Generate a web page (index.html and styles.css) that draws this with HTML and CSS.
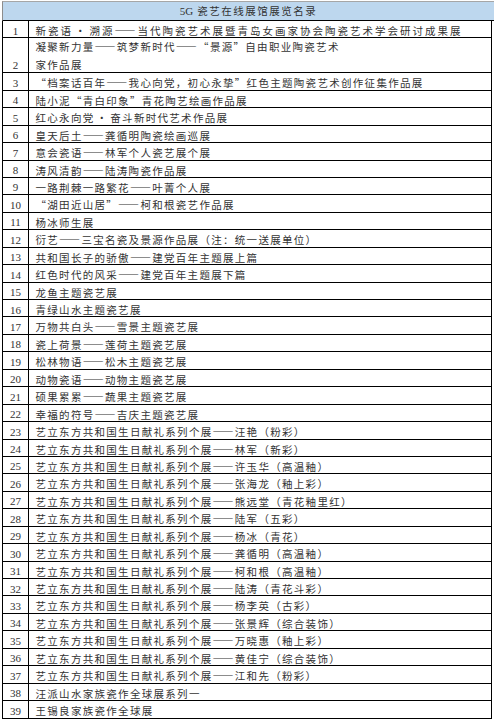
FILE: index.html
```html
<!DOCTYPE html>
<html lang="zh-CN">
<head>
<meta charset="utf-8">
<title>5G瓷艺在线展馆展览名录</title>
<link rel="stylesheet" href="styles.css">
</head>
<body>
<div class="sheet">
  <div class="head"><span class="lat">5G</span> 瓷艺在线展馆展览名录</div>
  <div class="row"><div class="no">1</div><div class="name wide">新瓷语<span class="dot">•</span>溯源——当代陶瓷艺术展暨青岛女画家协会陶瓷艺术学会研讨成果展</div></div>
  <div class="row tall"><div class="no">2</div><div class="name">凝聚新力量——筑梦新时代——“景源”自由职业陶瓷艺术<br>家作品展</div></div>
  <div class="row"><div class="no">3</div><div class="name">“档案话百年——我心向党，初心永挚”红色主题陶瓷艺术创作征集作品展</div></div>
  <div class="row"><div class="no">4</div><div class="name">陆小泥“青白印象”青花陶艺绘画作品展</div></div>
  <div class="row"><div class="no">5</div><div class="name">红心永向党<span class="dot">•</span>奋斗新时代艺术作品展</div></div>
  <div class="row"><div class="no">6</div><div class="name">皇天后土——龚循明陶瓷绘画巡展</div></div>
  <div class="row"><div class="no">7</div><div class="name">意会瓷语——林军个人瓷艺展个展</div></div>
  <div class="row"><div class="no">8</div><div class="name">涛风清韵——陆涛陶瓷作品展</div></div>
  <div class="row"><div class="no">9</div><div class="name">一路荆棘一路繁花——叶菁个人展</div></div>
  <div class="row"><div class="no">10</div><div class="name">“湖田近山居”——柯和根瓷艺作品展</div></div>
  <div class="row"><div class="no">11</div><div class="name">杨冰师生展</div></div>
  <div class="row"><div class="no">12</div><div class="name">衍艺——三宝名瓷及景源作品展（注：统一送展单位）</div></div>
  <div class="row"><div class="no">13</div><div class="name">共和国长子的骄傲——建党百年主题展上篇</div></div>
  <div class="row"><div class="no">14</div><div class="name">红色时代的风采——建党百年主题展下篇</div></div>
  <div class="row"><div class="no">15</div><div class="name">龙鱼主题瓷艺展</div></div>
  <div class="row"><div class="no">16</div><div class="name">青绿山水主题瓷艺展</div></div>
  <div class="row"><div class="no">17</div><div class="name">万物共白头——雪景主题瓷艺展</div></div>
  <div class="row"><div class="no">18</div><div class="name">瓷上荷景——莲荷主题瓷艺展</div></div>
  <div class="row"><div class="no">19</div><div class="name">松林物语——松木主题瓷艺展</div></div>
  <div class="row"><div class="no">20</div><div class="name">动物瓷语——动物主题瓷艺展</div></div>
  <div class="row"><div class="no">21</div><div class="name">硕果累累——蔬果主题瓷艺展</div></div>
  <div class="row"><div class="no">22</div><div class="name">幸福的符号——吉庆主题瓷艺展</div></div>
  <div class="row"><div class="no">23</div><div class="name">艺立东方共和国生日献礼系列个展——汪艳（粉彩）</div></div>
  <div class="row"><div class="no">24</div><div class="name">艺立东方共和国生日献礼系列个展——林军（新彩）</div></div>
  <div class="row"><div class="no">25</div><div class="name">艺立东方共和国生日献礼系列个展——许玉华（高温釉）</div></div>
  <div class="row"><div class="no">26</div><div class="name">艺立东方共和国生日献礼系列个展——张海龙（釉上彩）</div></div>
  <div class="row"><div class="no">27</div><div class="name">艺立东方共和国生日献礼系列个展——熊远堂（青花釉里红）</div></div>
  <div class="row"><div class="no">28</div><div class="name">艺立东方共和国生日献礼系列个展——陆军（五彩）</div></div>
  <div class="row"><div class="no">29</div><div class="name">艺立东方共和国生日献礼系列个展——杨冰（青花）</div></div>
  <div class="row"><div class="no">30</div><div class="name">艺立东方共和国生日献礼系列个展——龚循明（高温釉）</div></div>
  <div class="row"><div class="no">31</div><div class="name">艺立东方共和国生日献礼系列个展——柯和根（高温釉）</div></div>
  <div class="row"><div class="no">32</div><div class="name">艺立东方共和国生日献礼系列个展——陆涛（青花斗彩）</div></div>
  <div class="row"><div class="no">33</div><div class="name">艺立东方共和国生日献礼系列个展——杨李英（古彩）</div></div>
  <div class="row"><div class="no">34</div><div class="name">艺立东方共和国生日献礼系列个展——张景辉（综合装饰）</div></div>
  <div class="row"><div class="no">35</div><div class="name">艺立东方共和国生日献礼系列个展——万晓惠（釉上彩）</div></div>
  <div class="row"><div class="no">36</div><div class="name">艺立东方共和国生日献礼系列个展——黄佳宁（综合装饰）</div></div>
  <div class="row"><div class="no">37</div><div class="name">艺立东方共和国生日献礼系列个展——江和先（粉彩）</div></div>
  <div class="row"><div class="no">38</div><div class="name">汪派山水家族瓷作全球展系列一</div></div>
  <div class="row"><div class="no">39</div><div class="name">王锡良家族瓷作全球展</div></div>
</div>
</body>
</html>
```

FILE: styles.css
```css
html, body {
  margin: 0;
  padding: 0;
  background: #ffffff;
}

.sheet {
  margin: 1px 0 0 2px;
  width: 490px;
  font-family: "Noto Sans CJK SC", sans-serif;
  color: #333333;
}

.head {
  box-sizing: border-box;
  height: 20px;
  margin-right: -2px;
  background: #bdd7ee;
  border-top: 1px solid #a6a6a6;
  border-left: 1px solid #8c8c8c;
  border-bottom: 1px solid #000000;
  text-align: center;
  font-size: 10.5px;
  letter-spacing: 1.5px;
  line-height: 18px;
  white-space: nowrap;
}

.lat {
  font-family: "Liberation Serif", serif;
  font-size: 11px;
  letter-spacing: 0;
}

.row {
  box-sizing: border-box;
  display: flex;
  height: 17.45px;
  border-left: 1px solid #000000;
  border-right: 1px solid #000000;
  border-bottom: 1px solid #000000;
}

.row.tall {
  height: 34.9px;
}

.no {
  box-sizing: border-box;
  flex: none;
  width: 26px;
  border-right: 1px solid #000000;
  padding-top: 1.5px;
  text-align: center;
  font-family: "Liberation Serif", serif;
  font-size: 11px;
  line-height: 17.45px;
}

.tall .no {
  padding-top: 18.9px;
}

.name {
  flex: 1;
  padding: 1px 0 0 6.5px;
  font-size: 10.5px;
  letter-spacing: 1.3px;
  line-height: 17.45px;
  white-space: nowrap;
}

.tall .name {
  padding-top: 0;
}

.name.wide {
  letter-spacing: 2px;
}

.dot {
  padding: 0 2px;
}
```
